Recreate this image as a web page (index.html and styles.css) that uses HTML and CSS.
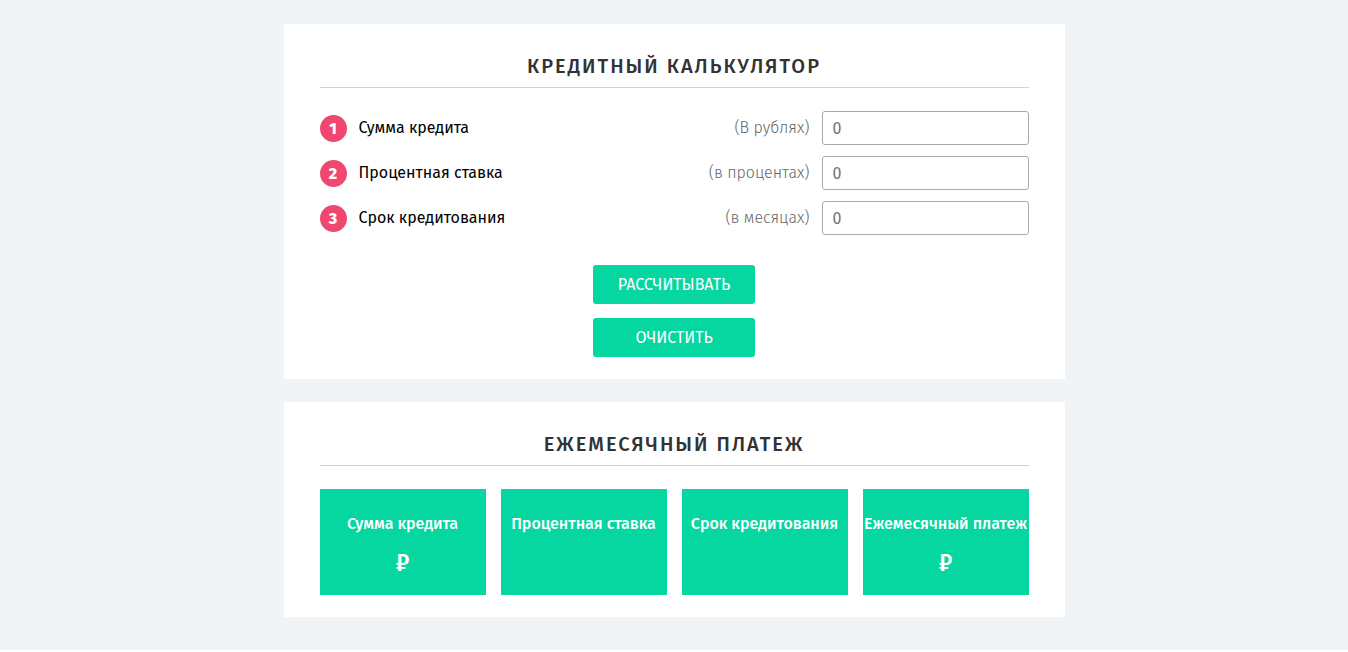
FILE: index.html
```html
<!DOCTYPE html>
<html class="root" lang="ru">
<head>
<meta charset="utf-8">
<meta name="viewport" content="width=device-width, initial-scale=1">
<title>Кредитный калькулятор</title>
<link rel="stylesheet" href="styles.css">
</head>
<body>
<main class="page">
  <form class="card">
    <h1 class="title">Кредитный калькулятор</h1>
    <div class="fields">
      <div class="field">
        <span class="badge">1</span>
        <label class="label" for="sum">Сумма кредита</label>
        <span class="hint" id="sum-hint">(В рублях)</span>
        <input class="input" id="sum" type="text" inputmode="numeric" placeholder="0" aria-describedby="sum-hint">
      </div>
      <div class="field">
        <span class="badge">2</span>
        <label class="label" for="rate">Процентная ставка</label>
        <span class="hint" id="rate-hint">(в процентах)</span>
        <input class="input" id="rate" type="text" inputmode="decimal" placeholder="0" aria-describedby="rate-hint">
      </div>
      <div class="field">
        <span class="badge">3</span>
        <label class="label" for="term">Срок кредитования</label>
        <span class="hint" id="term-hint">(в месяцах)</span>
        <input class="input" id="term" type="text" inputmode="numeric" placeholder="0" aria-describedby="term-hint">
      </div>
    </div>
    <div class="actions">
      <button class="button" type="button">Рассчитывать</button>
      <button class="button" type="reset">Очистить</button>
    </div>
  </form>
  <section class="card">
    <h2 class="title">Ежемесячный платеж</h2>
    <div class="results">
      <div class="result"><h3 class="result-name">Сумма кредита</h3><p class="result-value">₽</p></div>
      <div class="result"><h3 class="result-name">Процентная ставка</h3></div>
      <div class="result"><h3 class="result-name">Срок кредитования</h3></div>
      <div class="result"><h3 class="result-name">Ежемесячный платеж</h3><p class="result-value">₽</p></div>
    </div>
  </section>
</main>
</body>
</html>
```
FILE: styles.css
```css
* {
  box-sizing: border-box;
  margin: 0;
}

.root {
  background: #fff;
}

body {
  background: #f0f4f7;
  color: #000;
  font: 400 16px/24px "Fira Sans", Roboto, "Noto Sans", sans-serif;
}

.page {
  display: grid;
  gap: 23px;
  max-width: 781px;
  margin: 0 auto;
  padding: 24px 0 33px;
}

.card {
  padding: 28px 36px 22px;
  background: #fff;
}

.title {
  margin-bottom: 23px;
  padding-bottom: 7px;
  border-bottom: 1px solid #d3d3d3;
  color: #333;
  font-size: 20px;
  font-weight: 500;
  line-height: 28px;
  letter-spacing: 2px;
  text-align: center;
  text-transform: uppercase;
}

.fields {
  display: grid;
  gap: 11px;
}

.field {
  display: flex;
  align-items: center;
  gap: 12px;
}

.badge {
  width: 27px;
  height: 27px;
  border-radius: 50%;
  background: #ef476f;
  color: #fff;
  font-weight: 800;
  line-height: 27px;
  text-align: center;
}

.label {
  flex: 1;
}

.hint {
  color: #666;
  font-weight: 300;
}

.input {
  width: 207px;
  height: 34px;
  padding: 0 10px;
  border: 1px solid #aaa;
  border-radius: 3px;
  background: #fff;
  font: inherit;
}

.input::placeholder {
  color: #757575;
}

.actions {
  display: grid;
  justify-content: center;
  gap: 14px;
  margin-top: 30px;
}

.button {
  width: 162px;
  height: 39px;
  border: 0;
  border-radius: 3px;
  background: #06d6a0;
  color: #fff;
  font: inherit;
  text-transform: uppercase;
  cursor: pointer;
}

.results {
  display: grid;
  grid-template-columns: repeat(4, 1fr);
  gap: 15px;
}

.result {
  min-height: 106px;
  padding-top: 23px;
  background: #06d6a0;
  color: #fff;
  text-align: center;
}

.result-name {
  font-size: 16px;
  font-weight: 500;
  line-height: 24px;
  white-space: nowrap;
}

.result-value {
  margin-top: 11px;
  font-size: 24px;
  font-weight: 500;
  line-height: 32px;
}
```
